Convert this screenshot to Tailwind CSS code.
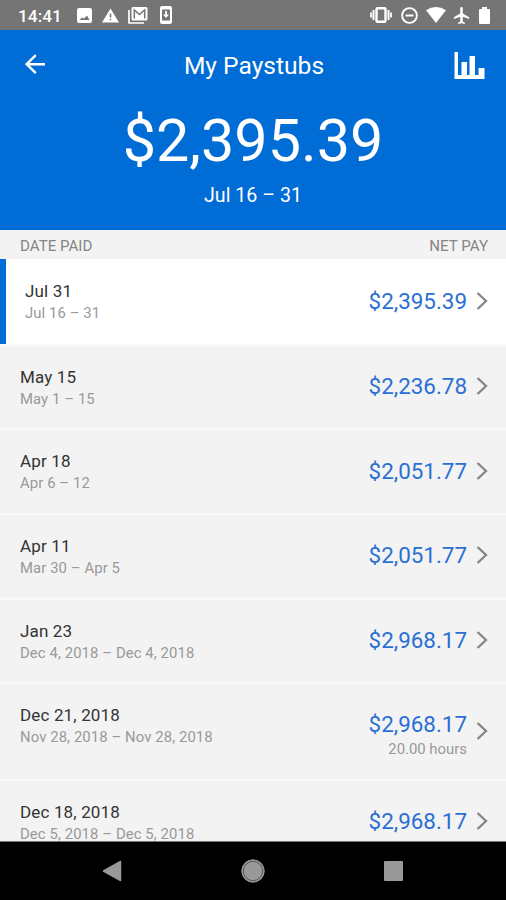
<!DOCTYPE html>
<html lang="en">
<head>
<meta charset="utf-8">
<title>My Paystubs</title>
<script src="https://cdn.jsdelivr.net/npm/@tailwindcss/browser@4"></script>
</head>
<body class="w-[506px] h-[900px] overflow-hidden flex flex-col bg-[#f3f3f3] font-['Roboto',sans-serif]">
<div class="h-[30px] shrink-0 bg-[#757575] flex items-center text-white pl-[18px] pr-[16px]">
  <span class="w-[43px] text-[17.300px] leading-[30px] font-medium pt-[2px]">14:41</span>
  <svg class="ml-[16px]" width="15" height="15" viewBox="0 0 15 15"><rect width="15" height="15" rx="2" fill="#fff"/><path d="M2.500 12 5 9.500 7 10.500 10 7.500 12.500 12Z" fill="#757575"/></svg>
  <svg class="ml-[10px]" width="17" height="15" viewBox="0 0 18 15"><path d="M9 0 18 15H0Z" fill="#fff"/><path d="M8.200 5.500h1.600v4H8.200zM8.200 11h1.600v1.600H8.200z" fill="#757575"/></svg>
  <svg class="ml-[9px]" width="20" height="17" viewBox="0 0 20 17"><path d="M1 3v13h15" fill="none" stroke="#fff" stroke-width="1.700"/><rect x="3.500" y="0" width="16" height="13.500" rx="1.500" fill="#fff"/><path d="M6.300 11.500V3l5.200 4.500L16.700 3v8.500" fill="none" stroke="#757575" stroke-width="1.500"/></svg>
  <svg class="ml-[12px]" width="12" height="18" viewBox="0 0 12 18"><rect width="12" height="18" rx="2" fill="#fff"/><rect x="2" y="3.500" width="8" height="11" fill="#757575"/><path d="M5.100 5h1.800v3.500H9L6 12 3 8.500h2.100Z" fill="#fff"/></svg>
  <div class="grow"></div>
  <svg width="22" height="16" viewBox="0 0 22 16"><rect x="6.500" y="1.200" width="9" height="13.600" rx="1" fill="none" stroke="#fff" stroke-width="2.400"/><path d="M3.500 3v10M18.500 3v10" stroke="#fff" stroke-width="2"/><path d="M1 5.500v5M21 5.500v5" stroke="#fff" stroke-width="1.800"/></svg>
  <svg class="ml-[9px]" width="17" height="17" viewBox="0 0 17 17"><circle cx="8.500" cy="8.500" r="7.400" fill="none" stroke="#fff" stroke-width="1.900"/><path d="M4.500 8.500h8" stroke="#fff" stroke-width="2"/></svg>
  <svg class="ml-[8px]" width="20" height="16" viewBox="0 0 20 16"><path d="M0 3.200Q10-3 20 3.200L10 16Z" fill="#fff"/></svg>
  <svg class="ml-[7px] mt-[1px]" width="17" height="17" viewBox="2 2 20 20"><path d="M21 16v-2l-7.500-4.500V3.500a1.500 1.500 0 0 0-3 0v6L3 14v2l7.500-2.500V19l-2.500 1.500V22l4-1 4 1v-1.500L13.500 19v-5.500Z" fill="#fff"/></svg>
  <svg class="ml-[9px]" width="11" height="17" viewBox="0 0 11 17"><path d="M3 0h5v2h2q1 0 1 1v13q0 1-1 1H1q-1 0-1-1V3q0-1 1-1h2Z" fill="#fff"/></svg>
</div>
<header class="h-[200px] shrink-0 bg-[#006cd6] text-white flex flex-col">
  <div class="h-[70px] flex items-center justify-between pl-[25px] pr-[21px]">
    <svg class="-mt-[1px]" width="32" height="21" viewBox="0 0 32 21"><path d="M10.800 1.200 1.600 10.200l9.200 9M2 10.200h18" fill="none" stroke="#fff" stroke-width="2.400"/></svg>
    <h1 class="text-[24.600px] leading-[30px] whitespace-nowrap pt-[2px] -ml-[3px]">My Paystubs</h1>
    <svg width="31" height="27" viewBox="0 0 31 27"><path d="M.5 0H4v23h3.500V10H13v13h2.500V4H21v19h3.500v-7H30.500v11H.5Z" fill="#fff"/></svg>
  </div>
  <div class="h-[80px] flex items-center justify-center text-[59.300px] leading-[80px] pt-[2px]">$2,395.39</div>
  <div class="text-center text-[19.600px] leading-[30px] pt-[1px]">Jul 16 – 31</div>
</header>
<div class="h-[29px] shrink-0 bg-[#f3f3f3] flex items-center justify-between pl-[20px] pr-[18px] pt-[3px] text-[15.100px] text-[#858585]"><span>DATE PAID</span><span>NET PAY</span></div>
<main id="list" class="h-[582px] shrink-0 overflow-hidden"></main>
<nav class="h-[59px] shrink-0 bg-black border-t border-[#777] flex items-start pt-[17px] pl-[102px]">
  <svg class="mt-[1px]" width="20" height="22" viewBox="0 0 20 22"><path d="M1.500 11 18.500 1.500v19Z" fill="#999" stroke="#999" stroke-width="1.500" stroke-linejoin="round"/></svg>
  <svg class="ml-[119px]" width="24" height="24" viewBox="0 0 24 24"><circle cx="12" cy="12" r="11.200" fill="#999" stroke="#999"/><circle cx="12" cy="12" r="9.700" fill="none" stroke="#555" stroke-width="1"/></svg>
  <svg class="ml-[119px] mt-[2px]" width="19" height="20" viewBox="0 0 19 20"><rect width="19" height="20" rx="1" fill="#999"/></svg>
</nav>
<script>
const rows = [
  ["Jul 31","Jul 16 – 31","$2,395.39"],
  ["May 15","May 1 – 15","$2,236.78"],
  ["Apr 18","Apr 6 – 12","$2,051.77"],
  ["Apr 11","Mar 30 – Apr 5","$2,051.77"],
  ["Jan 23","Dec 4, 2018 – Dec 4, 2018","$2,968.17"],
  ["Dec 21, 2018","Nov 28, 2018 – Nov 28, 2018","$2,968.17","20.00 hours"],
  ["Dec 18, 2018","Dec 5, 2018 – Dec 5, 2018","$2,968.17"]
];
document.getElementById("list").innerHTML = rows.map(([date, period, pay, hours], i) => `
<div class="${i === 0 ? "bg-white border-l-[6px] border-l-[#006cd6] pl-[19px] h-[84.500px]" : "bg-[#f3f3f3] pl-[20px] border-t-2 border-t-[#fafafa] " + (hours ? "h-[96.700px]" : "h-[84.700px]")} pr-[18px] flex justify-between">
  <div class="${i === 0 ? "pt-[21px]" : "pt-[20px]"}">
    <div class="text-[17px] leading-[22px] tracking-[.15px] text-[#333]">${date}</div>
    <div class="text-[14.850px] leading-[22px] tracking-[.1px] text-[#999]">${period}</div>
  </div>
  <div class="flex items-center ${i === 0 ? "" : "-mt-[2px]"}">
    <div class="text-right ${hours ? "pt-[11px]" : ""}">
      <div class="text-[22.400px] leading-[26px] text-[#2a6fd4]">${pay}</div>
      ${hours ? `<div class="text-[14.900px] leading-[24px] text-[#999]">${hours}</div>` : ""}
    </div>
    <svg class="ml-[9px]" width="12" height="18" viewBox="0 0 12 18"><path d="M1.500 1 10 9l-8.500 8" fill="none" stroke="#858585" stroke-width="2.300"/></svg>
  </div>
</div>`).join("");
</script>
</body>
</html>
